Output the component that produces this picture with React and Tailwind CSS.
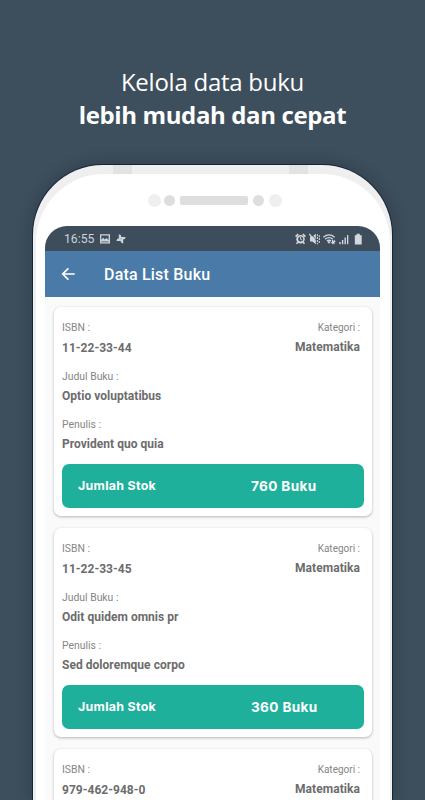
import React from 'react';

const books = [
  { isbn: '11-22-33-44', title: 'Optio voluptatibus', author: 'Provident quo quia', stock: '760 Buku' },
  { isbn: '11-22-33-45', title: 'Odit quidem omnis pr', author: 'Sed doloremque corpo', stock: '360 Buku' },
  { isbn: '979-462-948-0' },
];

function Field({ label, value, first }) {
  return (
    <div>
      <div className="h-5 text-[10.4px] leading-5 text-[#858585]">{label}</div>
      <div className={`h-[19px] text-[12px] font-bold tracking-[0.03px] text-[#6c6c6c] ${first ? 'leading-[20px]' : 'leading-[19px]'}`}>{value}</div>
    </div>
  );
}

function Category({ value }) {
  return (
    <div className="text-right">
      <div className="h-5 text-[10px] leading-5 text-[#858585]">Kategori :</div>
      <div className="h-[19px] text-[12px] font-bold leading-[19px] tracking-[0.06px] text-[#6c6c6c]">{value}</div>
    </div>
  );
}

function BookCard({ book }) {
  return (
    <div className="h-[209px] shrink-0 rounded-[7px] bg-white pl-2 pr-[8px] pt-[11px] shadow-[0_1px_3px_rgba(0,0,0,0.28)]">
      <div className="flex flex-col gap-[9.5px]">
        <div className="flex justify-between pr-[4px]">
          <Field label="ISBN :" value={book.isbn} first />
          <Category value="Matematika" />
        </div>
        {book.title && <Field label="Judul Buku :" value={book.title} />}
        {book.author && <Field label="Penulis :" value={book.author} />}
      </div>
      {book.stock && (
        <div className="mt-[10px] flex h-11 rounded-[7px] bg-[#1eb09b] pl-4 font-['Inter',sans-serif] font-bold text-white">
          <div className="w-[173px] text-[12.4px] leading-[43px] tracking-[0.3px]">Jumlah Stok</div>
          <div className="text-[13.6px] leading-[45px] tracking-[0.35px]">{book.stock}</div>
        </div>
      )}
    </div>
  );
}

function StatusIcons() {
  return (
    <svg width="70" height="14" viewBox="0 0 70 14" fill="#d3d8dc">
      <circle cx="5.5" cy="7.2" r="4.2" />
      <path d="M.6 4.6 3.2 2M10.4 4.6 7.8 2M2.8 10.2l-1.3 1.5M8.2 10.2l1.3 1.5" fill="none" stroke="#d3d8dc" strokeWidth="1.6" />
      <circle cx="5.7" cy="7" r="2.5" fill="#3d4d5b" />
      <path d="M5.6 5v2.3l1.5.7" fill="none" stroke="#d3d8dc" strokeWidth="1" />
      <path d="M15 4.6h2.4l3.4-2.9v10.6l-3.4-2.9H15z" />
      <path d="m14.3 2 2.8 3.4" stroke="#d3d8dc" strokeWidth="1.2" />
      <path d="m16.6 2 4.6 6" stroke="#3d4d5b" strokeWidth=".7" />
      <path d="M22.4 2.2v10M24.3 3.2v8" fill="none" stroke="#d3d8dc" strokeWidth="1.1" strokeDasharray="2 .9" />
      <path d="M28.4 5.2Q34 .6 39.6 5.2M30.1 7.2q3.9-3.2 7.8 0M31.9 9q2.1-1.6 4.2 0" fill="none" stroke="#d3d8dc" strokeWidth="1.4" />
      <path d="m32.4 9.9 1.6-1 1.6 1-1.6 1.9zM37 7.9h1v2.2h1.1l-1.6 2.3-1.6-2.3H37zM39.6 12.3h-1V9.9h-.9l1.5-2.2 1.6 2.2h-1.2z" />
      <path d="M44.3 10h1.4v2.2h-1.4zM46.9 8h1.4v4.2h-1.4zM49.5 5.5h1.4v6.7h-1.4zM52 3h1.3v9.2H52z" />
      <path d="M59.8 3.2h1.8V1.8h3.2v1.4h1.9v9.2h-6.9z" />
    </svg>
  );
}

function StatusBar() {
  return (
    <div className="flex h-[25px] shrink-0 items-center bg-[#3d4d5b] pl-[19px] pr-[15px] text-[12.2px] text-[#cdd3d7]">
      <span className="w-[35px] pt-[2px] leading-[25px]">16:55</span>
      <svg width="28" height="12" viewBox="0 0 28 12" fill="#cdd3d7">
        <path fillRule="evenodd" d="M1 1.2h10v9.3H1zM2.3 2.5v4.2L4.2 4.8l1.6 1.8 1.6-1.5 2.2 2V2.5zM2.3 9.3h7.3v-.8H2.3z" />
        <path d="M22 5.7h-2.2V1.2q2.6.2 2.6 2.5zM22.2 5.7V3.9h4.4q-.2 2.6-2.6 2.6zM22 6.1h2.2v4.5q-2.6-.2-2.6-2.5zM21.8 6.1v1.8h-4.4q.2-2.6 2.6-2.6z" />
      </svg>
      <div className="ml-auto pt-px"><StatusIcons /></div>
    </div>
  );
}

export default function App() {
  return (
    <div className="h-[800px] w-[425px] overflow-hidden bg-[#3d4e5c] font-['Roboto',sans-serif]">
      <div className="flex h-[165px] flex-col items-center pt-[65px] font-['Open_Sans','Noto_Sans',sans-serif] text-white">
        <div className="whitespace-nowrap text-[24px] font-normal leading-[33px] tracking-[-0.25px]">Kelola data buku</div>
        <div className="whitespace-nowrap text-[24px] font-bold leading-[33px] tracking-[-0.38px]">lebih mudah dan cepat</div>
      </div>

      <div className="ml-[33px] h-[635px] w-[359px] rounded-t-[70px] bg-[#efefef] shadow-[0_0_0_1px_#16263a,0_0_16px_rgba(10,20,30,0.3)]">
        <div className="flex h-[9px] justify-between pl-[80px] pr-[84px]">
          <div className="h-[9px] w-[19px] bg-[#e3e3e3]" />
          <div className="h-[9px] w-[19px] bg-[#e3e3e3]" />
        </div>
        <div className="ml-[3px] mr-[2px] h-[626px] rounded-t-[68px] bg-white">
          <div className="flex h-[52px] items-center pl-[112px]">
            <div className="h-[13px] w-[13px] rounded-full bg-[#efefef]" />
            <div className="ml-[3px] h-[11px] w-[11px] rounded-full bg-[#dedede]" />
            <div className="mx-[5px] h-[9px] w-[68px] rounded-[2px] bg-[#dedede]" />
            <div className="mr-[5px] h-[11px] w-[11px] rounded-full bg-[#dedede]" />
            <div className="h-[13px] w-[13px] rounded-full bg-[#efefef]" />
          </div>
          <div className="ml-[9px] flex h-[574px] w-[335px] flex-col overflow-hidden rounded-t-[22px] bg-[#fafafa]">
            <StatusBar />
            <div className="flex h-[46px] shrink-0 items-center bg-[#497aa8] pl-[16px] text-white">
              <svg width="15" height="14" viewBox="0 0 15 14" fill="none" stroke="white" strokeWidth="1.7">
                <path d="M13.7 7H2M7.4 1.3 1.7 7l5.7 5.7" />
              </svg>
              <span className="ml-[28px] pt-[2px] text-[16px] font-medium leading-[46px] tracking-[0.2px]">Data List Buku</span>
            </div>
            <div className="flex flex-col gap-3 pl-[9px] pr-[8px] pt-[10px]">
              {books.map((book) => (
                <BookCard key={book.isbn} book={book} />
              ))}
            </div>
          </div>
        </div>
      </div>
    </div>
  );
}
